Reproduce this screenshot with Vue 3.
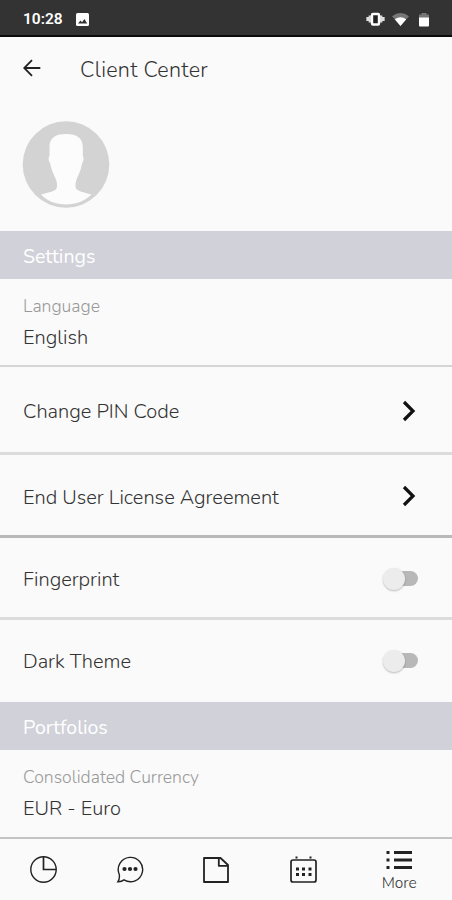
<template>
  <div class="screen">
    <div class="status-bar">
      <span class="time">10:28</span>
      <svg class="picture-icon" viewBox="0 0 13 13" aria-hidden="true">
        <rect width="13" height="13" rx="1.5" fill="#fff" />
        <path d="M2 10.5l2.5-3 1.5 1.7L8.4 6l2.8 4.5z" fill="#333" />
      </svg>
      <svg class="system-icons" viewBox="0 0 66 18" aria-hidden="true">
        <path d="M1.500 7v4M3.800 5.500v7M15.200 5.500v7M17.500 7v4" stroke="#ddd" stroke-width="2.300" />
        <rect x="6" y="4" width="7" height="10.500" rx="1" fill="#222" stroke="#fff" stroke-width="2.400" />
        <path d="M26 6.200Q34.500 -.2 43 6.200L34.500 16z" fill="#777" />
        <path d="M28.800 9.200Q34.500 5.500 40.200 9.200L34.500 16z" fill="#fff" />
        <path d="M53 8V4.500h2.500V3h5v1.500H63V8z" fill="#777" />
        <path d="M53 7.500h10v8q0 1-1 1h-8q-1 0-1-1z" fill="#fff" />
      </svg>
    </div>

    <header class="header">
      <svg class="back" viewBox="0 0 18 18" aria-hidden="true">
        <path d="M17.300 9H1.500M9 1.200L1.200 9 9 16.800" />
      </svg>
      <h1 class="title">Client Center</h1>
    </header>

    <div class="profile">
      <svg class="avatar" viewBox="0 0 88 88" aria-hidden="true">
        <circle cx="44" cy="43.500" r="43.300" fill="#d3d3d3" />
        <path
          d="M44 13C33 13 27.500 17 27.500 26v9c-1.500 1-.8 6 .8 7.500 1 7 3.700 11 5.700 16 1.200 3.500 1.300 7 .5 9-1.500 3-7 3.500-15.500 6C25 80 34 83.500 44 83.500S63 80 69.500 73.500C61 71 56 70.500 54 67.500c-1-2-.5-5.500.5-9 2-5 4.500-9 5.500-16 1.600-1.500 2.200-6.500.8-7.500v-9C60.800 17 55 13 44 13z"
          fill="#fcfcfc" />
      </svg>
    </div>

    <div class="section"><span class="settings">Settings</span></div>
    <div class="field language">
      <span class="label">Language</span>
      <span class="value">English</span>
    </div>
    <div v-for="row in rows" :key="row.text" class="row" :class="row.name">
      <span class="text">{{ row.text }}</span>
      <svg v-if="row.type === 'link'" class="chevron" viewBox="0 0 14 22" aria-hidden="true">
        <path d="M2 2l9 9-9 9" />
      </svg>
      <div v-else class="switch">
        <div class="thumb"></div>
      </div>
    </div>

    <div class="section"><span class="portfolios">Portfolios</span></div>
    <div class="field currency">
      <span class="label">Consolidated Currency</span>
      <span class="value">EUR - Euro</span>
    </div>

    <nav class="tabs">
      <div class="tab">
        <svg viewBox="0 0 28 28" aria-hidden="true">
          <circle cx="14.500" cy="13.500" r="12.700" />
          <path d="M14.500 .8v12.700h12.700" stroke-width="1.700" />
        </svg>
      </div>
      <div class="tab">
        <svg viewBox="0 0 28 28" aria-hidden="true">
          <path d="M3.300 18.500A12.200 12.200 0 1 1 8 23.900Q5.500 26 1.800 25.800 3.900 23 3.300 18.500z" />
          <path d="M8.500 13h.01M14 13h.01M19.500 13h.01" stroke-width="4.200" stroke-linecap="round" />
        </svg>
      </div>
      <div class="tab">
        <svg viewBox="0 0 28 28" aria-hidden="true">
          <path d="M2 2h16.500l7.500 7v17H2zM16.800 2v7.800H26" stroke-width="1.800" stroke-linejoin="round" />
        </svg>
      </div>
      <div class="tab">
        <svg viewBox="0 0 28 28" aria-hidden="true">
          <rect x="2" y="4" width="25" height="22" rx="2" stroke-width="1.700" />
          <path d="M7.500 .5v2M21.500 .5v2" stroke-width="2" />
          <path d="M7 13h3M13 13h3M19.500 13h3M7 18.500h3M13 18.500h3M19.500 18.500h3" stroke-width="3" />
        </svg>
      </div>
      <div class="tab more">
        <svg viewBox="0 0 28 22" aria-hidden="true">
          <path d="M1.500 3.500h3M1.500 11h3M1.500 18.500h3M9 3.500h18M9 11h18M9 18.500h18" stroke-width="3.200" />
        </svg>
        <span class="more-text">More</span>
      </div>
    </nav>
  </div>
</template>

<script setup>
const rows = [
  { name: 'pin', text: 'Change PIN Code', type: 'link' },
  { name: 'license', text: 'End User License Agreement', type: 'link' },
  { name: 'fingerprint', text: 'Fingerprint', type: 'switch' },
  { name: 'dark', text: 'Dark Theme', type: 'switch' },
];
</script>

<style>
body {
  margin: 0;
  background: #fafafa;
}
</style>

<style scoped>
.screen {
  display: flex;
  flex-direction: column;
  width: 452px;
  height: 900px;
  overflow: hidden;
  background: #fafafa;
  color: #333;
  font-family: Nunito, Lato, sans-serif;
  font-size: 20px;
  font-weight: 300;
  white-space: nowrap;
}

.screen > * {
  flex-shrink: 0;
  box-sizing: border-box;
}

.status-bar {
  display: flex;
  align-items: center;
  height: 37px;
  padding: 3px 20px 0 23px;
  border-bottom: 2px solid #0b0b0b;
  background: #333;
}

.time {
  width: 40px;
  color: #fff;
  font: 600 15.5px/20px Roboto, sans-serif;
}

.picture-icon {
  width: 13px;
  height: 13px;
  margin-left: 13px;
}

.system-icons {
  width: 66px;
  height: 18px;
  margin-left: auto;
}

.header {
  display: flex;
  align-items: center;
  height: 63px;
  padding: 0 22px;
}

.back {
  width: 18px;
  height: 18px;
  margin: -1px 0 0 1px;
  fill: none;
  stroke: #222;
  stroke-width: 1.8;
}

.title {
  margin: 3px 0 0 39px;
  font-size: 21.5px;
  font-weight: 300;
  line-height: 30px;
  letter-spacing: 0.3px;
}

.profile {
  height: 131px;
  padding: 21px 22px;
}

.avatar {
  display: block;
  width: 88px;
  height: 88px;
}

.section {
  display: flex;
  align-items: center;
  height: 48px;
  padding: 3px 23px 0;
  background: #d1d1d9;
  color: #fff;
  font-size: 19.5px;
  font-weight: 400;
}

.field {
  display: flex;
  flex-direction: column;
  padding: 15px 23px 0;
}

.language {
  height: 88px;
  border-bottom: 2px solid #d5d5d5;
}

.currency {
  height: 89px;
  border-bottom: 2px solid #c3c3c3;
}

.label {
  color: #999;
  font-size: 17.6px;
  line-height: 24px;
}

.value {
  margin-top: 5px;
  line-height: 30px;
}

.row {
  display: flex;
  align-items: center;
  justify-content: space-between;
  padding: 4px 34px 0 23px;
  border-bottom: 3px solid #dcdcdc;
}

.pin {
  height: 88px;
}

.license {
  height: 83px;
  border-bottom-color: #b9b9b9;
}

.fingerprint {
  height: 82px;
}

.dark {
  height: 82px;
  padding-top: 1px;
  border-bottom: 0;
}

.chevron {
  width: 14px;
  height: 22px;
  margin: -2px 2px 0 0;
  fill: none;
  stroke: #111;
  stroke-width: 3.2;
}

.switch {
  display: flex;
  align-items: center;
  width: 31px;
  height: 15px;
  margin-top: -2px;
  border-radius: 8px;
  background: #b8b8b8;
}

.thumb {
  width: 22px;
  height: 22px;
  margin-left: -4px;
  border-radius: 50%;
  background: #ececec;
  box-shadow: 0 1px 2px rgba(0, 0, 0, 0.25);
}

.tabs {
  display: flex;
  height: 61px;
}

.tab {
  display: flex;
  align-items: center;
  justify-content: center;
  width: 86.6px;
}

.tab svg {
  width: 28px;
  height: 28px;
  fill: none;
  stroke: #222;
  stroke-width: 1.4;
}

.more {
  flex-direction: column;
  width: 105.6px;
  padding-top: 3px;
}

.more svg {
  height: 22px;
}

.more-text {
  margin-top: 1px;
  font-size: 15.5px;
  line-height: 22px;
}
</style>
